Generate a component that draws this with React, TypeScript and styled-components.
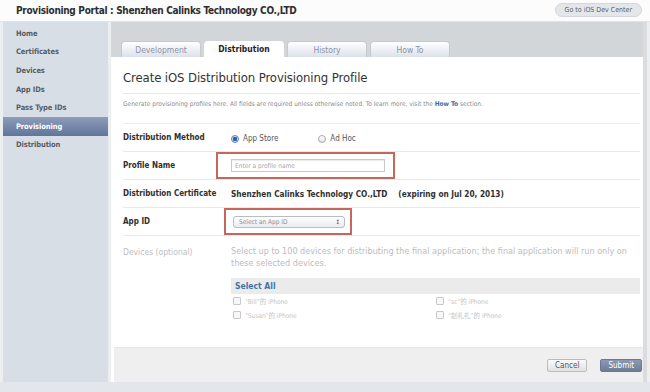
import React from "react";
import styled, { createGlobalStyle } from "styled-components";

const Global = createGlobalStyle`
  html, body {
    margin: 0;
    padding: 0;
    background: #ffffff;
  }
  body {
    font-family: "DejaVu Sans Condensed", "Liberation Sans", Arial, sans-serif;
    color: #333;
  }
`;

const navItems = [
  "Home",
  "Certificates",
  "Devices",
  "App IDs",
  "Pass Type IDs",
  "Provisioning",
  "Distribution",
];

const tabs = ["Development", "Distribution", "History", "How To"];

const devices = [
  "\u201CBill\u201D\u7684 iPhone",
  "\u201Csc\u201D\u7684 iPhone",
  "\u201CSusan\u201D\u7684 iPhone",
  "\u201C\u8D75\u793C\u793C\u201D\u7684 iPhone",
];

function App() {
  return (
    <Style.Page>
      <Global />
      <Style.Header>
        <Style.PortalTitle>
          Provisioning Portal : Shenzhen Calinks Technology CO.,LTD
        </Style.PortalTitle>
        <Style.DevCenter>Go to iOS Dev Center</Style.DevCenter>
      </Style.Header>

      <Style.Body>
        <Style.Sidebar>
          {navItems.map((item) => (
            <Style.NavItem key={item} active={item === "Provisioning"}>
              {item}
            </Style.NavItem>
          ))}
        </Style.Sidebar>

        <Style.Main>
          <Style.TabStrip>
            {tabs.map((tab) => (
              <Style.Tab key={tab} active={tab === "Distribution"}>
                {tab}
              </Style.Tab>
            ))}
          </Style.TabStrip>

          <Style.Content>
            <Style.Title>Create iOS Distribution Provisioning Profile</Style.Title>
            <Style.Intro>
              Generate provisioning profiles here. All fields are required
              unless otherwise noted. To learn more, visit the{" "}
              <Style.Link>How To</Style.Link> section.
            </Style.Intro>

            <Style.Row>
              <Style.Label>Distribution Method</Style.Label>
              <Style.RadioGroup>
                <Style.RadioOption>
                  <Style.Radio checked />
                  App Store
                </Style.RadioOption>
                <Style.RadioOption>
                  <Style.Radio />
                  Ad Hoc
                </Style.RadioOption>
              </Style.RadioGroup>
            </Style.Row>

            <Style.Row>
              <Style.Label>Profile Name</Style.Label>
              <Style.Highlight offset={15} padX={13} right={8}>
                <Style.TextInput>Enter a profile name</Style.TextInput>
              </Style.Highlight>
            </Style.Row>

            <Style.Row>
              <Style.Label>Distribution Certificate</Style.Label>
              <Style.Value>
                Shenzhen Calinks Technology CO.,LTD
                <Style.Expiry>(expiring on Jul 20, 2013)</Style.Expiry>
              </Style.Value>
            </Style.Row>

            <Style.Row>
              <Style.Label>App ID</Style.Label>
              <Style.Highlight offset={7} padX={7} right={5}>
                <Style.Select>
                  Select an App ID
                  <Style.Arrows>&#x2195;</Style.Arrows>
                </Style.Select>
              </Style.Highlight>
            </Style.Row>

            <Style.DeviceRow>
              <Style.Label muted>Devices (optional)</Style.Label>
              <Style.DeviceBlock>
                <Style.Muted>
                  Select up to 100 devices for distributing the final
                  application; the final application will run only on these
                  selected devices.
                </Style.Muted>
                <Style.SelectAll>Select All</Style.SelectAll>
                <Style.DeviceGrid>
                  {devices.map((d) => (
                    <Style.Device key={d}>
                      <Style.Check />
                      {d}
                    </Style.Device>
                  ))}
                </Style.DeviceGrid>
              </Style.DeviceBlock>
            </Style.DeviceRow>
          </Style.Content>

          <Style.Footer>
            <Style.Button>Cancel</Style.Button>
            <Style.Button primary>Submit</Style.Button>
          </Style.Footer>
        </Style.Main>
      </Style.Body>
      <Style.BottomStrip />
    </Style.Page>
  );
}

export default App;

const Style = {
  Page: styled.div`
    width: 650px;
    height: 392px;
    display: flex;
    flex-direction: column;
    overflow: hidden;
    background: #eceff2;
  `,
  Header: styled.div`
    height: 22px;
    flex: none;
    display: flex;
    align-items: center;
    justify-content: space-between;
    padding: 0 8px 0 16px;
    background: #fcfcfc;
    border-bottom: 1px solid #e3e3e3;
    box-sizing: border-box;
  `,
  PortalTitle: styled.div`
    font-size: 10px;
    letter-spacing: -0.3px;
    font-weight: bold;
    color: #2e2e2e;
  `,
  DevCenter: styled.div`
    font-size: 7px;
    color: #5a5f66;
    background: #e4e7ea;
    border: 1px solid #d3d6da;
    border-radius: 7px;
    padding: 2px 9px;
    margin-top: -2px;
  `,
  Body: styled.div`
    flex: 1;
    display: flex;
    padding-left: 3px;
    min-height: 0;
  `,
  Sidebar: styled.div`
    width: 105px;
    flex: none;
    background: #d8dee6;
    padding-top: 2px;
    box-sizing: border-box;
  `,
  NavItem: styled.div<{ active?: boolean }>`
    height: 18.6px;
    display: flex;
    align-items: center;
    padding-left: 13px;
    font-size: 7.5px;
    letter-spacing: -0.1px;
    font-weight: bold;
    color: ${(p) => (p.active ? "#ffffff" : "#575c64")};
    background: ${(p) =>
      p.active ? "linear-gradient(#8d9dba, #60759c)" : "transparent"};
  `,
  Main: styled.div`
    flex: 1;
    margin-left: 3px;
    display: flex;
    flex-direction: column;
    border-right: 4px solid #dcdcdc;
    margin-right: 3px;
    background: #ffffff;
  `,
  TabStrip: styled.div`
    height: 35px;
    flex: none;
    display: flex;
    align-items: flex-end;
    gap: 3px;
    padding-left: 10px;
    background: #d3d6d9;
    box-sizing: border-box;
  `,
  Tab: styled.div<{ active?: boolean }>`
    width: 80px;
    height: 16px;
    display: flex;
    align-items: center;
    justify-content: center;
    font-size: 8.5px;
    border-radius: 4px 4px 0 0;
    color: ${(p) => (p.active ? "#1f1f1f" : "#8b93a3")};
    font-weight: ${(p) => (p.active ? "bold" : "normal")};
    background: ${(p) =>
      p.active ? "#ffffff" : "linear-gradient(#ffffff, #dde1ec)"};
    border: ${(p) => (p.active ? "none" : "1px solid #c6c9ce")};
    border-bottom: none;
    box-sizing: border-box;
  `,
  Content: styled.div`
    flex: 1;
    padding: 11px 3px 0 12px;
  `,
  Title: styled.div`
    font-size: 13px;
    letter-spacing: -0.1px;
    color: #333;
    line-height: 20px;
    padding-bottom: 5px;
    border-bottom: 1px solid #e9e9e9;
  `,
  Intro: styled.div`
    font-size: 6.5px;
    color: #8c8c8c;
    height: 30px;
    padding-top: 6px;
    box-sizing: border-box;
    border-bottom: 1px solid #ececec;
  `,
  Link: styled.span`
    color: #3a6ea5;
    font-weight: bold;
  `,
  Row: styled.div`
    display: grid;
    grid-template-columns: 108px 1fr;
    align-items: center;
    height: 27px;
    border-bottom: 1px solid #e9e9e9;
  `,
  Label: styled.div<{ muted?: boolean }>`
    font-size: ${(p) => (p.muted ? "8.5px" : "8px")};
    font-weight: ${(p) => (p.muted ? "normal" : "bold")};
    color: ${(p) => (p.muted ? "#bdbdbd" : "#2f2f2f")};
  `,
  RadioGroup: styled.div`
    display: flex;
    gap: 40px;
    padding-top: 2px;
  `,
  RadioOption: styled.label`
    display: flex;
    align-items: center;
    gap: 4px;
    font-size: 8px;
    color: #555;
  `,
  Radio: styled.span<{ checked?: boolean }>`
    width: 8px;
    height: 8px;
    border-radius: 50%;
    box-sizing: border-box;
    border: 1px solid ${(p) => (p.checked ? "#5f7fb8" : "#a9a9a9")};
    background: ${(p) =>
      p.checked
        ? "radial-gradient(circle, #2f5fb4 0 2px, #d9e3f4 2.5px)"
        : "linear-gradient(#ffffff, #e6e6e6)"};
  `,
  Highlight: styled.div<{ offset: number; padX: number; right: number }>`
    justify-self: start;
    margin-left: -${(p) => p.offset}px;
    padding: 5px ${(p) => p.right}px 5px ${(p) => p.padX}px;
    border: 2px solid #c4685d;
    height: 27px;
    box-sizing: border-box;
    display: flex;
    align-items: center;
  `,
  TextInput: styled.div`
    width: 154px;
    height: 13px;
    border: 1px solid #c9c9c9;
    box-sizing: border-box;
    font-size: 6.5px;
    color: #a8a8a8;
    padding-left: 3px;
    display: flex;
    align-items: center;
    box-shadow: inset 0 1px 1px rgba(0, 0, 0, 0.08);
  `,
  Select: styled.div`
    width: 112px;
    height: 12px;
    border: 1px solid #b9bcc2;
    border-radius: 3px;
    box-sizing: border-box;
    font-size: 6.5px;
    color: #8e8e8e;
    padding: 0 4px 0 5px;
    display: flex;
    align-items: center;
    justify-content: space-between;
    background: linear-gradient(#ffffff, #e9ebef);
  `,
  Arrows: styled.span`
    font-size: 6px;
    color: #555;
  `,
  Value: styled.div`
    font-size: 8.2px;
    font-weight: bold;
    color: #2f2f2f;
  `,
  Expiry: styled.span`
    margin-left: 11px;
  `,
  DeviceRow: styled.div`
    display: grid;
    grid-template-columns: 108px 1fr;
    align-items: start;
    padding-top: 11px;
  `,
  DeviceBlock: styled.div`
    display: flex;
    flex-direction: column;
  `,
  Muted: styled.div`
    font-size: 9px;
    line-height: 12px;
    color: #bcbcbc;
    margin-top: -2px;
  `,
  SelectAll: styled.div`
    margin-top: 9px;
    height: 16px;
    display: flex;
    align-items: center;
    padding-left: 4px;
    background: #ebebeb;
    font-size: 8.5px;
    font-weight: bold;
    color: #3f74ac;
  `,
  DeviceGrid: styled.div`
    display: grid;
    grid-template-columns: 203px 1fr;
    row-gap: 3px;
    padding-top: 1px;
    padding-left: 2px;
  `,
  Device: styled.div`
    display: flex;
    align-items: center;
    gap: 4px;
    height: 11px;
    font-size: 6.5px;
    color: #c4c4c4;
    font-family: "DejaVu Sans Condensed", "Liberation Sans", "Noto Sans CJK SC", sans-serif;
  `,
  Check: styled.span`
    width: 6px;
    height: 6px;
    border: 1px solid #c9c9c9;
    border-radius: 1px;
    background: #f7f7f7;
  `,
  Footer: styled.div`
    height: 35px;
    flex: none;
    display: flex;
    align-items: center;
    justify-content: flex-end;
    gap: 13px;
    padding: 0 1px 0 0;
    margin-left: 3px;
    background: #efefef;
    border-top: 1px solid #e6e6e6;
    box-sizing: border-box;
  `,
  Button: styled.div<{ primary?: boolean }>`
    height: 13px;
    padding: 0 7px;
    display: flex;
    align-items: center;
    font-size: 8px;
    border-radius: 2px;
    box-sizing: border-box;
    color: ${(p) => (p.primary ? "#ffffff" : "#555555")};
    background: ${(p) =>
      p.primary
        ? "linear-gradient(#8c99b1, #6d7d99)"
        : "linear-gradient(#fafafa, #e1e1e1)"};
    border: 1px solid ${(p) => (p.primary ? "#6a7892" : "#bcbcbc")};
  `,
  BottomStrip: styled.div`
    height: 10px;
    flex: none;
    background: #e3e7eb;
  `,
};
